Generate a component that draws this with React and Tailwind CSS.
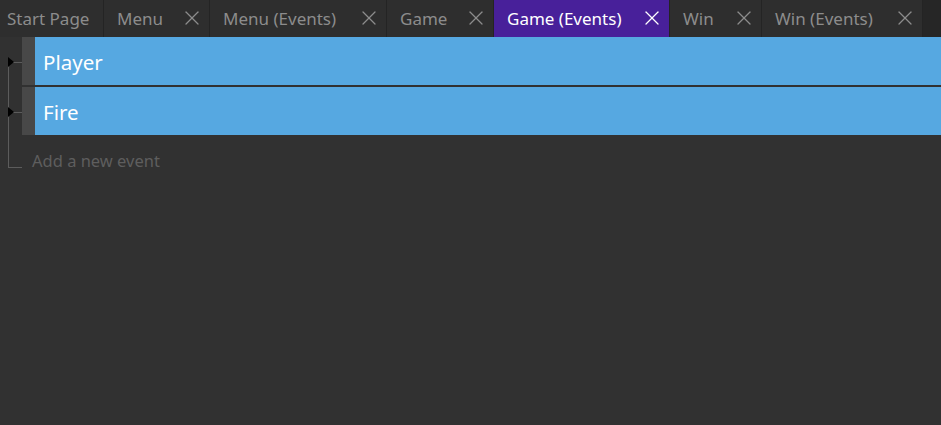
import { X } from "lucide-react";

const tabs = [
  { name: "Start Page", w: "w-[104px]", pl: "pl-[7px]", close: false },
  { name: "Menu", w: "w-[106px]", pl: "pl-[13px]", close: true },
  { name: "Menu (Events)", w: "w-[177px]", pl: "pl-[13px]", close: true },
  { name: "Game", w: "w-[107px]", pl: "pl-[13px]", close: true },
  { name: "Game (Events)", w: "w-[176px]", pl: "pl-[13px]", close: true, active: true },
  { name: "Win", w: "w-[92px]", pl: "pl-[13px]", close: true },
  { name: "Win (Events)", w: "w-[161px]", pl: "pl-[13px]", close: true },
];

const events = ["Player", "Fire"];

const Tab = ({ tab }) => (
  <div
    className={`${tab.w} ${tab.pl} shrink-0 h-full flex items-center justify-between pr-[5px] border-r border-[#242424] ${
      tab.active ? "bg-[#48209a] text-white" : "bg-[#2e2e2e] text-[#8c8c8c]"
    }`}
  >
    <span className="text-[17px] leading-none pb-[1px]">{tab.name}</span>
    {tab.close && <X size={24} strokeWidth={1.3} className="mb-[2px]" />}
  </div>
);

export default function App() {
  return (
    <div
      className="w-[941px] h-[425px] bg-[#313131] overflow-hidden flex flex-col"
      style={{ fontFamily: '"Noto Sans", "Open Sans", sans-serif' }}
    >
      {/* Tab strip */}
      <div className="h-[37px] flex bg-[#262626]">
        {tabs.map((tab) => (
          <Tab key={tab.name} tab={tab} />
        ))}
      </div>

      {/* Events list */}
      <div className="flex flex-col gap-[2px]">
        {events.map((name, i) => (
          <div key={name} className="h-[48px] flex relative">
            {/* tree connector */}
            <div className="w-[22px] shrink-0 relative">
              <div className="absolute left-[8px] top-[25px] w-[14px] h-px bg-[#5c5c5c]" />
              <div
                className={`absolute left-[8px] w-px bg-[#5c5c5c] ${
                  i === 0 ? "top-[25px] bottom-[-2px]" : "top-[-2px] bottom-[-2px]"
                }`}
              />
              <div className="absolute left-[8px] top-[20px] w-0 h-0 border-y-[5px] border-y-transparent border-l-[6px] border-l-black" />
            </div>
            <div className="w-[13px] shrink-0 bg-[#484848]" />
            <div className="flex-1 bg-[#56a8e1] flex items-center pl-[8px]">
              <span className="text-white text-[20.5px] leading-none pt-[2px]">{name}</span>
            </div>
          </div>
        ))}

        {/* Add a new event */}
        <div className="h-[50px] flex relative">
          <div className="w-[22px] shrink-0 relative">
            <div className="absolute left-[8px] top-0 h-[31px] w-px bg-[#5c5c5c]" />
            <div className="absolute left-[8px] top-[30px] w-[14px] h-px bg-[#5c5c5c]" />
          </div>
          <div className="pl-[10px] pt-[16px] text-[#5e5e5e] text-[16.5px] leading-none">Add a new event</div>
        </div>
      </div>
    </div>
  );
}
